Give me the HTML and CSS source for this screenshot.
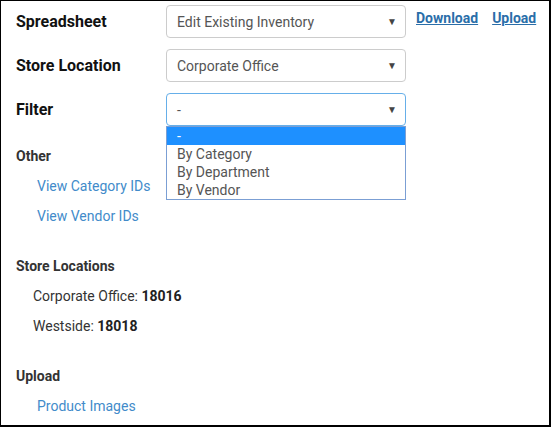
FILE: index.html
```html
<!DOCTYPE html>
<html>
<head>
<meta charset="utf-8">
<link rel="stylesheet" href="styles.css">
</head>
<body>
<div class="panel">
  <div class="form">
    <div class="row">
      <div class="label">Spreadsheet</div>
      <div class="select"><span>Edit Existing Inventory</span><span class="arrow">▼</span></div>
      <div class="actions">
        <a class="action" href="#">Download</a>
        <a class="action" href="#">Upload</a>
      </div>
    </div>
    <div class="row">
      <div class="label">Store Location</div>
      <div class="select"><span>Corporate Office</span><span class="arrow">▼</span></div>
    </div>
    <div class="row">
      <div class="label">Filter</div>
      <div class="select-wrap">
        <div class="select focus"><span>-</span><span class="arrow">▼</span></div>
        <ul class="options">
          <li class="opt active">-</li>
          <li class="opt">By Category</li>
          <li class="opt">By Department</li>
          <li class="opt">By Vendor</li>
        </ul>
      </div>
    </div>
  </div>

  <div class="section first">
    <div class="heading">Other</div>
    <a class="link" href="#">View Category IDs</a>
    <a class="link" href="#">View Vendor IDs</a>
  </div>
  <div class="section">
    <div class="heading">Store Locations</div>
    <div class="item">Corporate Office: <b>18016</b></div>
    <div class="item">Westside: <b>18018</b></div>
  </div>
  <div class="section">
    <div class="heading">Upload</div>
    <a class="link" href="#">Product Images</a>
  </div>
</div>
</body>
</html>
```

FILE: styles.css
```css
html, body {
  margin: 0;
  padding: 0;
  background: #fff;
}
.panel {
  box-sizing: border-box;
  width: 551px;
  height: 427px;
  border-top: 1px solid #000;
  border-left: 1px solid #000;
  border-right: 2px solid #000;
  border-bottom: 2px solid #000;
  padding: 4px 0 0 15px;
  font-family: Roboto, "Liberation Sans", sans-serif;
  color: #333;
}
.form {
  display: flex;
  flex-direction: column;
  gap: 11px;
}
.row {
  display: flex;
  align-items: center;
  height: 33px;
}
.label {
  width: 150px;
  font-size: 16px;
  font-weight: bold;
  color: #111;
}
.select-wrap {
  position: relative;
}
.select {
  box-sizing: border-box;
  width: 240px;
  height: 33px;
  border: 1px solid #ccc;
  border-radius: 4px;
  display: flex;
  align-items: center;
  justify-content: space-between;
  padding: 0 8px 0 10px;
  font-size: 14px;
  color: #555;
}
.select.focus {
  border-color: #66afe9;
}
.arrow {
  font-size: 10px;
  color: #444;
}
.actions {
  display: flex;
  gap: 14px;
  margin-left: 10px;
  margin-top: -8px;
}
.action {
  font-size: 14px;
  font-weight: bold;
  color: #2a6ea9;
  text-decoration: underline;
}
.options {
  position: absolute;
  left: 0;
  top: 33px;
  box-sizing: border-box;
  width: 240px;
  margin: 0;
  padding: 0;
  list-style: none;
  border: 1px solid #7b9fd4;
  background: #fff;
}
.opt {
  height: 18px;
  line-height: 18px;
  padding-left: 10px;
  font-size: 14px;
  color: #555;
}
.opt.active {
  background: #1e90ff;
  color: #fff;
}
.section {
  display: flex;
  flex-direction: column;
  align-items: flex-start;
  gap: 10px;
  margin-top: 30px;
}
.section.first {
  margin-top: 20px;
}
.heading {
  font-size: 14px;
  font-weight: bold;
  line-height: 20px;
  color: #333;
}
.link {
  font-size: 14px;
  line-height: 20px;
  color: #428bca;
  text-decoration: none;
  margin-left: 21px;
}
.item {
  font-size: 14px;
  line-height: 20px;
  color: #333;
  margin-left: 17px;
}
.item b {
  font-weight: bold;
  color: #222;
}
```
